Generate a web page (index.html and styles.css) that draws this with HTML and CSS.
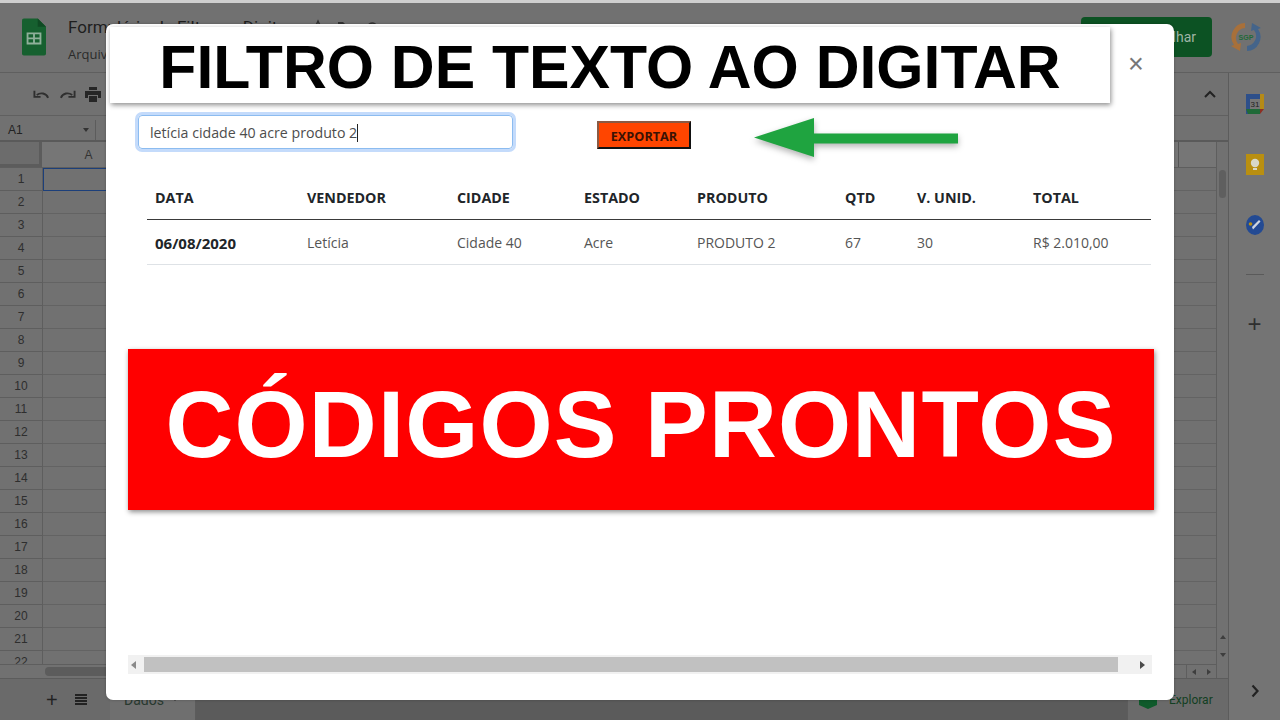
FILE: index.html
```html
<!DOCTYPE html>
<html lang="pt-BR">
<head>
<meta charset="utf-8">
<title>Filtro de texto ao digitar</title>
<link rel="stylesheet" href="styles.css">
</head>
<body>
<div class="app">
  <div class="strip"></div>
  <header class="header">
    <svg class="sheets-logo" viewBox="0 0 26 40"><path d="M2 0h15l9 9v29a2 2 0 0 1-2 2H2a2 2 0 0 1-2-2V2a2 2 0 0 1 2-2z" fill="#16602f"/><path d="M17 0l9 9h-9z" fill="#0f4a23"/><path d="M6 16h14v11H6z" fill="none" stroke="#8fb09a" stroke-width="2"/><path d="M6 21.500h14M13 16v11" stroke="#8fb09a" stroke-width="2"/></svg>
    <div class="doc">
      <div class="doc-title">Formulário de Filtro ao Digitar</div>
      <div class="doc-menu">Arquivo</div>
    </div>
    <div class="doc-icons">
      <svg viewBox="0 0 16 16"><path d="M8 2l2 4.500 4.500.5-3.400 3 1 4.500L8 12.200 3.900 14.500l1-4.500L1.500 7 6 6.500z" fill="none" stroke="#333" stroke-width="1.500"/></svg>
      <svg viewBox="0 0 16 16"><path d="M1 3h5l2 2h7v9H1z" fill="#333"/></svg>
      <svg viewBox="0 0 16 16"><path d="M4 13a3 3 0 0 1 0-6 4.500 4.500 0 0 1 8.500 0 3 3 0 0 1 0 6z" fill="none" stroke="#333" stroke-width="1.500"/></svg>
    </div>
    <div class="share">Compartilhar</div>
    <svg class="avatar" viewBox="0 0 32 32"><path d="M15 2A14 14 0 0 0 4 24l-3 1 9 5 1-8-3 1A10 10 0 0 1 15 7z" fill="#a8703a"/><path d="M17 30A14 14 0 0 0 28 8l3-1-9-5-1 8 3-1a10 10 0 0 1-7 16z" fill="#44648a"/><text x="16" y="18.500" class="avatar-text">SGP</text></svg>
  </header>
  <div class="work">
    <div class="sheet">
      <div class="toolbar">
        <svg viewBox="0 0 18 12"><path d="M16 10C14 5 8 4 4 7M1.500 2.500V9h6.500" fill="none" stroke="#2f2f2f" stroke-width="2"/></svg>
        <svg viewBox="0 0 18 12"><path d="M2 10C4 5 10 4 14 7M16.500 2.500V9H10" fill="none" stroke="#2f2f2f" stroke-width="2"/></svg>
        <svg class="print" viewBox="0 0 16 15"><path d="M4 0h8v3H4zM0 4h16v7h-3V8H3v3H0zM4 9h8v6H4z" fill="#262626"/></svg>
        <svg class="caret" viewBox="0 0 12 8"><path d="M1 7l5-5 5 5" fill="none" stroke="#222" stroke-width="2"/></svg>
      </div>
      <div class="formula"><span class="namebox">A1</span><span class="drop"></span><span class="fdiv"></span></div>
      <div class="grid">
        <div class="grid-body">
          <div class="colhead">
            <div class="corner"></div>
            <div class="col-a">A</div>
            <div class="col-last"></div>
          </div>
          <div class="rows">
            <div class="rownums">
              <div>1</div><div>2</div><div>3</div><div>4</div><div>5</div><div>6</div><div>7</div><div>8</div><div>9</div><div>10</div><div>11</div>
              <div>12</div><div>13</div><div>14</div><div>15</div><div>16</div><div>17</div><div>18</div><div>19</div><div>20</div><div>21</div><div>22</div>
            </div>
            <div class="cells"><div class="selected"></div></div>
          </div>
          <div class="hscroll"><span class="hthumb"></span><span class="harrows"><i class="arrow-l"></i><i class="arrow-r"></i></span></div>
        </div>
        <div class="vscroll">
          <div class="vthumb"></div>
          <div class="vbtns"><i class="arrow-u"></i><i class="arrow-d"></i></div>
        </div>
      </div>
      <div class="tabs">
        <span class="plus">+</span>
        <span class="list"></span>
        <div class="tab">Dados <i></i></div>
        <div class="tabs-fill"></div>
        <div class="explore">
          <svg viewBox="0 0 18 18"><path d="M0 0l9 4 9-4v14l-9 4-9-4z" fill="#0f5a2b"/></svg>
          <span>Explorar</span>
        </div>
      </div>
    </div>
    <aside class="panel">
      <svg class="ic-cal" viewBox="0 0 18 20"><path d="M0 0h14v6H0z" fill="#2d4f8a"/><path d="M0 0h4v20H0z" fill="#2d4f8a"/><path d="M0 15h14v5H2z" fill="#1f6a38"/><path d="M14 0h4v15h-4z" fill="#b58a16"/><path d="M14 15h4l-4 5z" fill="#8e2f22"/><path d="M4 5h10v10H4z" fill="#777"/><text x="9" y="13" class="cal-text">31</text></svg>
      <svg class="ic-keep" viewBox="0 0 18 21"><path d="M0 0h18v21H0z" fill="#b98f10"/><circle cx="9" cy="9" r="4.200" fill="#d8d8c8"/><path d="M7 14h4v2H7z" fill="#d8d8c8"/></svg>
      <svg class="ic-task" viewBox="0 0 18 20"><ellipse cx="9" cy="10" rx="9" ry="10" fill="#234a93"/><path d="M6 12l7-7 1.500 1.500-7.500 8z" fill="#cfd6e0"/><circle cx="4.500" cy="9" r="1.800" fill="#b98f10"/></svg>
      <div class="panel-div"></div>
      <div class="panel-plus">+</div>
      <svg class="panel-next" viewBox="0 0 8 14"><path d="M1.500 1.500L6.500 7l-5 5.500" fill="none" stroke="#222" stroke-width="2.200"/></svg>
    </aside>
  </div>

  <div class="modal">
    <button class="close" type="button">×</button>
    <div class="controls">
      <div class="search">letícia cidade 40 acre produto 2<span class="cursor"></span></div>
      <button class="export" type="button">EXPORTAR</button>
      <svg class="green-arrow" viewBox="0 0 206 42"><path d="M1 20.500L61 1v15.500h144v10H61V40z" fill="#1fa440"/></svg>
    </div>
    <table class="data">
      <colgroup>
        <col class="c1"><col class="c2"><col class="c3"><col class="c4"><col class="c5"><col class="c6"><col class="c7"><col class="c8">
      </colgroup>
      <thead>
        <tr><th>DATA</th><th>VENDEDOR</th><th>CIDADE</th><th>ESTADO</th><th>PRODUTO</th><th>QTD</th><th>V. UNID.</th><th>TOTAL</th></tr>
      </thead>
      <tbody>
        <tr><th>06/08/2020</th><td>Letícia</td><td>Cidade 40</td><td>Acre</td><td>PRODUTO 2</td><td>67</td><td>30</td><td>R$ 2.010,00</td></tr>
      </tbody>
    </table>
    <div class="mscroll">
      <i class="m-left"></i>
      <span class="m-thumb"></span>
      <i class="m-right"></i>
    </div>
    <div class="title-card">FILTRO DE TEXTO AO DIGITAR</div>
    <div class="red-banner">CÓDIGOS PRONTOS</div>
  </div>
</div>
</body>
</html>
```
FILE: styles.css
```css
* { box-sizing: border-box; }
html, body { margin: 0; padding: 0; }
body { width: 1280px; height: 720px; overflow: hidden; background: #6f6f6f; font-family: "Liberation Sans", Arial, sans-serif; }
i { display: block; }

.app { position: relative; width: 1280px; height: 720px; display: flex; flex-direction: column; background: #717171; overflow: hidden; }
.strip { height: 3px; background: #cfcfcf; flex: none; }

.header { height: 70px; flex: none; display: flex; align-items: flex-start; border-bottom: 1px solid #5f5f5f; position: relative; }
.sheets-logo { width: 24px; height: 40px; margin: 14px 0 0 22px; flex: none; }
.doc { margin: 12px 0 0 22px; width: 242px; flex: none; color: #222; }
.doc-title { font: 17px/24px "Roboto", sans-serif; white-space: nowrap; color: #1e1e1e; }
.doc-menu { font: 13px/20px "Open Sans", sans-serif; margin-top: 5px; color: #2a2a2a; }
.doc-icons { display: flex; gap: 11px; margin: 16px 0 0 0; }
.doc-icons svg { width: 16px; height: 16px; }
.share { position: absolute; left: 1081px; top: 14px; width: 131px; height: 40px; background: #0c5223; border-radius: 4px; color: #9fb5a5; font: 14px/40px "Roboto", sans-serif; text-align: right; padding-right: 16px; }
.avatar { position: absolute; left: 1230px; top: 18px; width: 32px; height: 32px; }
.avatar-text { font: bold 7px "Liberation Sans", sans-serif; fill: #1f6a38; text-anchor: middle; }

.work { flex: 1; display: flex; min-height: 0; }
.sheet { flex: 1; display: flex; flex-direction: column; min-width: 0; }
.toolbar { height: 43px; flex: none; display: flex; align-items: center; padding-left: 33px; gap: 9px; border-bottom: 1px solid #606060; }
.toolbar svg { width: 17px; height: 12px; flex: none; }
.toolbar .print { width: 16px; height: 15px; }
.toolbar .caret { width: 12px; height: 8px; margin-left: auto; margin-right: 12px; }
.formula { height: 26px; flex: none; display: flex; align-items: center; padding-top: 3px; border-bottom: 2px solid #5a5a5a; position: relative; }
.namebox { font: 12px "Liberation Sans", sans-serif; color: #222; margin-left: 8px; width: 75px; }
.drop { width: 0; height: 0; border: 3px solid transparent; border-top: 4px solid #333; border-bottom: 0; }
.fdiv { width: 1px; height: 20px; background: #5c5c5c; margin-left: 6px; }

.grid { flex: 1; display: flex; min-height: 0; }
.grid-body { flex: 1; min-width: 0; display: flex; flex-direction: column; }
.colhead { height: 26px; flex: none; display: flex; background: #767676; border-bottom: 1px solid #5e5e5e; }
.corner { width: 42px; flex: none; background: #6c6c6c; border-right: 3px solid #5c5c5c; border-bottom: 3px solid #5c5c5c; }
.col-a { width: 93px; text-align: center; font: 12px/26px "Liberation Sans", sans-serif; color: #333; margin-right: 1043px; flex: none; }
.col-last { flex: 1; border-left: 1px solid #555; }
.rows { flex: 1; display: flex; min-height: 0; overflow: hidden; }
.rownums { width: 43px; flex: none; border-right: 1px solid #5e5e5e; }
.rownums div { height: 23px; flex: none; font: 12px/22px "Liberation Sans", sans-serif; text-align: center; color: #2e2e2e; border-bottom: 1px solid #5e5e5e; }
.cells { flex: 1; background-image: repeating-linear-gradient(to bottom, transparent 0, transparent 22px, #636363 22px, #636363 23px); position: relative; }
.selected { width: 90px; height: 23px; border: 1.5px solid #1c3f7a; }
.hscroll { height: 14px; flex: none; display: flex; align-items: center; padding-left: 45px; border-top: 1px solid #5e5e5e; }
.hthumb { width: 400px; height: 9px; background: #5c5c5c; border-radius: 4px; }
.harrows { margin-left: auto; display: flex; width: 30px; height: 14px; justify-content: space-around; align-items: center; border-left: 1px solid #5e5e5e; }
.arrow-l { border: 3px solid transparent; border-right: 4px solid #3e3e3e; border-left: 0; }
.arrow-r { border: 3px solid transparent; border-left: 4px solid #3e3e3e; border-right: 0; }
.vscroll { width: 12px; flex: none; border-left: 1px solid #5e5e5e; display: flex; flex-direction: column; padding-top: 28px; }
.vthumb { width: 7px; height: 28px; margin-left: 2px; background: #5f5f5f; border-radius: 4px; }
.vbtns { margin-top: auto; height: 50px; display: flex; flex-direction: column; align-items: center; justify-content: space-around; padding-bottom: 14px; }
.arrow-u { border: 3px solid transparent; border-bottom: 4px solid #3e3e3e; border-top: 0; }
.arrow-d { border: 3px solid transparent; border-top: 4px solid #3e3e3e; border-bottom: 0; }

.tabs { height: 42px; flex: none; display: flex; align-items: center; border-top: 1px solid #5c5c5c; background: #6a6a6a; position: relative; }
.plus { margin-left: 46px; width: 13px; font: 20px/20px "Liberation Sans", sans-serif; color: #222; }
.list { margin-left: 16px; width: 12px; height: 11px; flex: none; background: repeating-linear-gradient(to bottom, #222 0, #222 2px, transparent 2px, transparent 3px); }
.tab { margin-left: 23px; height: 100%; width: 86px; flex: none; display: flex; align-items: center; gap: 8px; padding: 0 0 0 14px; background: #6f6f6f; color: #29392f; font: 14px "Roboto", sans-serif; border-right: 1px solid #5c5c5c; }
.tab i { border: 3px solid transparent; border-top: 3px solid #333; border-bottom: 0; }
.tabs-fill { flex: 1; height: 100%; background: #5b5b5b; }
.explore { width: 101px; flex: none; display: flex; align-items: center; height: 100%; gap: 12px; padding-left: 11px; border-left: 1px solid #5c5c5c; background: #6a6a6a; }
.explore svg { width: 18px; height: 18px; flex: none; }
.explore span { font: 12px "Roboto", sans-serif; color: #123f22; }

.panel { width: 52px; flex: none; border-left: 1px solid #5c5c5c; background: #747474; display: flex; flex-direction: column; align-items: center; padding-top: 21px; }
.ic-cal { width: 18px; height: 20px; margin-left: 1px; }
.cal-text { font: 8px "Liberation Sans", sans-serif; fill: #222; text-anchor: middle; }
.ic-keep { width: 18px; height: 21px; margin: 40px 0 0 1px; }
.ic-task { width: 18px; height: 20px; margin: 40px 0 0 1px; }
.panel-div { width: 18px; height: 1px; background: #5a5a5a; margin: 39px 0 0 1px; }
.panel-plus { font: 24px/24px "Liberation Sans", sans-serif; color: #2f2f2f; margin-top: 37px; }
.panel-next { width: 8px; height: 14px; margin-top: auto; margin-bottom: 22px; }

.modal { position: absolute; left: 106px; top: 24px; width: 1068px; height: 676px; background: #fff; border-radius: 7px; box-shadow: 0 0 3px rgba(0,0,0,.25); }
.close { position: absolute; left: 1019px; top: 25px; width: 22px; height: 30px; border: 0; padding: 0; background: none; font: 27px/30px "Liberation Sans", sans-serif; color: #777; }
.controls { display: flex; align-items: flex-start; height: 41px; position: absolute; top: 91px; left: 32px; }
.search { width: 375px; height: 34px; border: 1px solid #8cbcf0; border-radius: 4px; box-shadow: 0 0 0 3px #c4dbfb; padding: 1px 0 0 11px; font: 14.200px/32px "Open Sans", sans-serif; color: #4d4d4d; display: flex; align-items: center; }
.cursor { width: 1px; height: 18px; background: #222; }
.export { margin: 6px 0 0 84px; width: 94px; height: 28px; padding: 2px 0 0; border: 2px solid; border-color: #8a5a44 #111 #111 #8a5a44; background: #ff4500; color: #3b1204; font: bold 12.700px "Open Sans", sans-serif; }
.green-arrow { width: 206px; height: 42px; margin: 2px 0 0 62px; flex: none; filter: drop-shadow(0 3px 3px rgba(0,0,0,.3)); }
.data { position: absolute; left: 41px; top: 150px; width: 1004px; table-layout: fixed; border-collapse: collapse; font-family: "Open Sans", sans-serif; font-size: 14px; color: #555; }
.c1 { width: 152px; } .c2 { width: 150px; } .c3 { width: 127px; } .c4 { width: 113px; } .c5 { width: 148px; } .c6 { width: 72px; } .c7 { width: 116px; } .c8 { width: 126px; }
.data th, .data td { text-align: left; padding: 2px 0 0 8px; white-space: nowrap; }
.data th { color: #212529; font-weight: 700; }
.data thead th { font-size: 14.300px; }
.data tbody th { font-size: 15px; }
.data thead tr { height: 45px; border-bottom: 1.500px solid #3a3a3a; }
.data tbody tr { height: 45px; border-bottom: 1px solid #dee2e6; }
.mscroll { position: absolute; left: 22px; top: 631px; width: 1024px; height: 19px; background: #f1f1f1; display: flex; align-items: center; }
.m-thumb { width: 974px; height: 15px; margin-left: 8px; background: #c1c1c1; }
.m-left { margin-left: 3px; border: 4px solid transparent; border-right: 5px solid #8a8a8a; border-left: 0; }
.m-right { margin-left: 22px; border: 4px solid transparent; border-left: 5px solid #4a4a4a; border-right: 0; }

.title-card { position: absolute; left: 4px; top: 3px; width: 1000px; height: 76px; background: #fff; box-shadow: 1px 2px 5px rgba(0,0,0,.45); color: #000; font: bold 60.700px/81px "Liberation Sans", sans-serif; text-align: center; white-space: nowrap; }
.red-banner { position: absolute; left: 22px; top: 325px; width: 1026px; height: 161px; background: #f00; box-shadow: 1px 2px 5px rgba(0,0,0,.45); color: #fff; font: bold 94px/151px "Liberation Sans", sans-serif; letter-spacing: 1.200px; text-align: center; white-space: nowrap; }
```
